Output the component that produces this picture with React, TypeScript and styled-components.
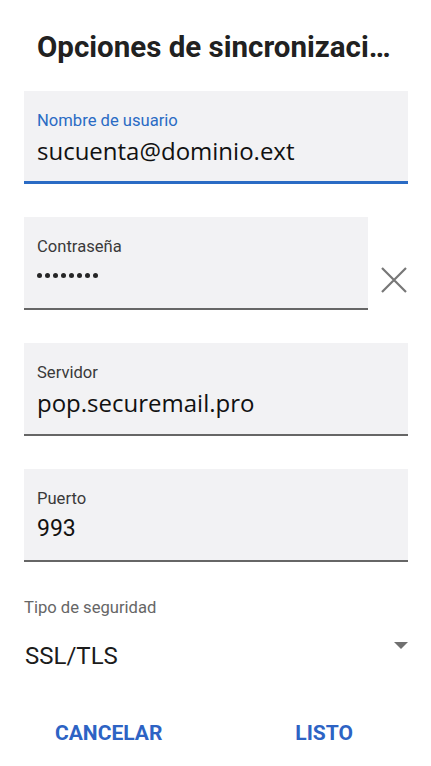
import React from "react";
import styled, { createGlobalStyle } from "styled-components";

const Global = createGlobalStyle`
  html, body { margin: 0; padding: 0; background: #ffffff; }
  body { font-family: Roboto, "Liberation Sans", sans-serif; }
`;

const Screen = styled.div`
  width: 431px;
  min-height: 766px;
  box-sizing: border-box;
  padding: 27px 23px 0 24px;
  display: flex;
  flex-direction: column;
`;

const Title = styled.h1`
  margin: 0 0 0 13px;
  font-family: Roboto, sans-serif;
  font-weight: 700;
  font-size: 29.5px;
  line-height: 40px;
  color: #212121;
  white-space: nowrap;
`;

const Fields = styled.div`
  margin-top: 24px;
  display: flex;
  flex-direction: column;
  flex-shrink: 0;
  gap: 33px;
`;

const FieldRow = styled.div`
  display: flex;
  align-items: flex-start;
  gap: 12px;
`;

const Field = styled.div<{ $focused?: boolean }>`
  flex: 1 0 auto;
  height: 93px;
  box-sizing: border-box;
  background: #f2f2f4;
  border-bottom: ${(p) => (p.$focused ? "3px solid #2a6bc4" : "2px solid #666666")};
  padding: 20px 13px 0;
  display: flex;
  flex-direction: column;
`;

const Label = styled.div<{ $focused?: boolean }>`
  font-family: Roboto, sans-serif;
  font-size: 16.6px;
  line-height: 20px;
  color: ${(p) => (p.$focused ? "#2a6bc4" : "#3a3a3a")};
`;

const Value = styled.div<{ $mono?: boolean }>`
  margin-top: 4px;
  font-family: ${(p) => (p.$mono ? "Roboto, sans-serif" : '"Open Sans", sans-serif')};
  font-size: ${(p) => (p.$mono ? 23 : 24)}px;
  line-height: 32px;
  color: #111111;
`;

const Dots = styled.div`
  margin-top: 16px;
  display: flex;
  gap: 3px;
`;

const Dot = styled.span`
  width: 5px;
  height: 5px;
  border-radius: 50%;
  background: #262626;
`;

const ClearButton = styled.button`
  width: 28px;
  height: 28px;
  padding: 0;
  border: none;
  background: transparent;
  margin-top: 49px;
  display: flex;
  align-items: center;
  justify-content: center;
`;

const SelectBlock = styled.div`
  margin-top: 36px;
  display: flex;
  flex-direction: column;
`;

const SelectLabel = styled.div`
  font-family: Roboto, sans-serif;
  font-size: 16.6px;
  line-height: 20px;
  color: #666666;
`;

const SelectRow = styled.div`
  margin-top: 24px;
  display: flex;
  align-items: flex-start;
  justify-content: space-between;
`;

const SelectValue = styled.div`
  padding-left: 1px;
  font-family: Roboto, sans-serif;
  font-size: 24px;
  line-height: 28px;
  color: #1c1c1c;
`;

const Caret = styled.div`
  margin-top: 0;
  width: 0;
  height: 0;
  border-left: 7px solid transparent;
  border-right: 7px solid transparent;
  border-top: 7px solid #707070;
`;

const Actions = styled.div`
  margin-top: 51px;
  display: flex;
`;

const ActionButton = styled.button<{ $offset: number }>`
  margin-left: ${(p) => p.$offset}px;
  padding: 0;
  border: none;
  background: transparent;
  font-family: Roboto, sans-serif;
  font-weight: 700;
  font-size: 21px;
  line-height: 24px;
  color: #2d63c4;
`;

function XIcon() {
  return (
    <svg width="28" height="28" viewBox="0 0 28 28">
      <path d="M2 2 L26 26 M26 2 L2 26" stroke="#777777" strokeWidth="2.2" fill="none" />
    </svg>
  );
}

export default function App() {
  return (
    <>
      <Global />
      <Screen>
        <Title>Opciones de sincronizaci…</Title>
        <Fields>
          <Field $focused>
            <Label $focused>Nombre de usuario</Label>
            <Value>sucuenta@dominio.ext</Value>
          </Field>
          <FieldRow>
            <Field>
              <Label>Contraseña</Label>
              <Dots>
                {Array.from({ length: 8 }).map((_, i) => (
                  <Dot key={i} />
                ))}
              </Dots>
            </Field>
            <ClearButton aria-label="Borrar">
              <XIcon />
            </ClearButton>
          </FieldRow>
          <Field>
            <Label>Servidor</Label>
            <Value>pop.securemail.pro</Value>
          </Field>
          <Field>
            <Label>Puerto</Label>
            <Value $mono>993</Value>
          </Field>
        </Fields>
        <SelectBlock>
          <SelectLabel>Tipo de seguridad</SelectLabel>
          <SelectRow>
            <SelectValue>SSL/TLS</SelectValue>
            <Caret />
          </SelectRow>
        </SelectBlock>
        <Actions>
          <ActionButton $offset={31}>CANCELAR</ActionButton>
          <ActionButton $offset={133}>LISTO</ActionButton>
        </Actions>
      </Screen>
    </>
  );
}
